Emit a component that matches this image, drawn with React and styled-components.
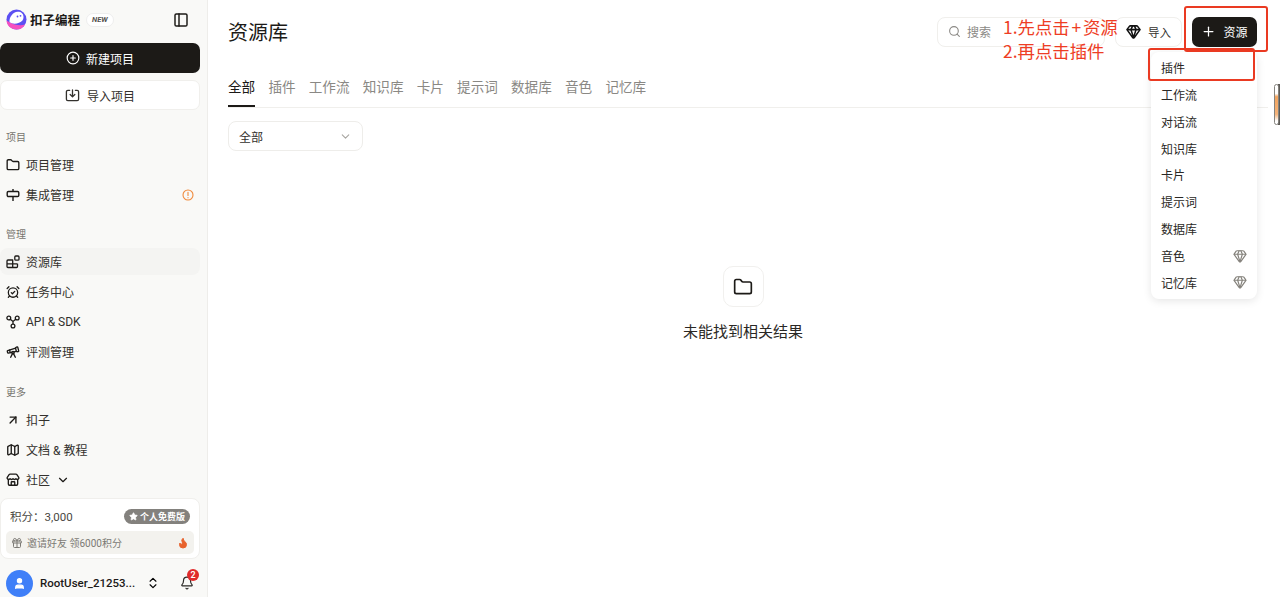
import React from "react";
import styled, { createGlobalStyle } from "styled-components";
import {
  AlarmClockCheck,
  ArrowUpRight,
  Bell,
  ChevronDown,
  ChevronsUpDown,
  CirclePlus,
  Flame,
  Folder,
  Gem,
  Gift,
  Map as MapIcon,
  PanelLeft,
  Plus,
  Search,
  Star,
  Store,
  Telescope,
  User,
} from "lucide-react";

const GlobalStyle = createGlobalStyle`
  html, body {
    margin: 0;
    height: 100%;
    overflow: hidden;
    background: #fff;
    font-family: "Roboto", "Noto Sans CJK SC", sans-serif;
  }
`;

const Page = styled.div`
  position: relative;
  display: flex;
  width: 1280px;
  height: 597px;
  overflow: hidden;
`;

const Sidebar = styled.aside`
  display: flex;
  flex-direction: column;
  flex: none;
  box-sizing: border-box;
  width: 208px;
  height: 597px;
  padding: 0 7px 0 0;
  background: #f9f9f7;
  border-right: 1px solid #eeedea;
`;

const Brand = styled.div`
  display: flex;
  align-items: center;
  height: 39px;
  margin-bottom: 1px;
  padding: 0 6px;
`;

const BrandName = styled.span`
  margin-left: 3px;
  font-size: 12.5px;
  font-weight: 700;
  color: #1c1a17;
`;

const NewTag = styled.span`
  margin-left: 6px;
  padding: 0 5px;
  height: 12px;
  line-height: 12px;
  border: 1px solid #eeeeee;
  border-radius: 7px;
  background: #fff;
  font-size: 7.5px;
  font-style: italic;
  font-weight: 700;
  color: #55534f;
`;

const Collapse = styled.span`
  display: flex;
  margin-left: auto;
  margin-right: 5px;
  color: #1c1a17;
`;

const PrimaryButton = styled.div`
  display: flex;
  align-items: center;
  justify-content: center;
  gap: 6px;
  height: 30px;
  margin-top: 3px;
  border-radius: 7px;
  background: #1c1a17;
  color: #fff;
  font-size: 12px;
`;

const SecondaryButton = styled.div`
  display: flex;
  align-items: center;
  justify-content: center;
  gap: 7px;
  height: 28px;
  margin-top: 7px;
  border: 1px solid #f0efec;
  border-radius: 7px;
  background: #fff;
  color: #33312d;
  font-size: 12px;
`;

const SectionLabel = styled.div`
  height: 16px;
  line-height: 16px;
  margin: ${(p) => p.$top}px 0 5px 6px;
  font-size: 10px;
  color: #77756f;
`;

const NavItem = styled.div`
  display: flex;
  align-items: center;
  gap: 6px;
  height: 27px;
  margin-bottom: 3px;
  padding: 0 6px;
  border-radius: 8px;
  background: ${(p) => (p.$active ? "#f4f4f2" : "transparent")};
  color: #33312d;
  font-size: 12px;
  svg {
    flex: none;
    color: #1c1a17;
  }
`;

const NavTail = styled.span`
  display: flex;
  margin-left: auto;
  svg {
    color: #f08a3c;
  }
`;

const CreditCard = styled.div`
  margin-top: 2px;
  height: 61px;
  box-sizing: border-box;
  padding: 9px 5px 0;
  border: 1px solid #f0efec;
  border-radius: 8px;
  background: #fff;
`;

const CreditRow = styled.div`
  display: flex;
  align-items: center;
  justify-content: space-between;
  height: 16px;
  padding: 0 4px;
  font-size: 11.5px;
  color: #4a4843;
`;

const PlanTag = styled.span`
  display: flex;
  align-items: center;
  gap: 2px;
  height: 15px;
  padding: 0 5px;
  border-radius: 8px;
  background: #83817d;
  color: #fff;
  font-size: 9px;
  font-weight: 600;
`;

const InviteRow = styled.div`
  display: flex;
  align-items: center;
  gap: 4px;
  height: 23px;
  margin-top: 7px;
  padding: 0 5px;
  border-radius: 5px;
  background: #f3f2ee;
  color: #7c7a75;
  font-size: 10px;
`;

const FlameWrap = styled.span`
  display: flex;
  margin-left: auto;
  color: #e8622c;
`;

const UserRow = styled.div`
  display: flex;
  align-items: center;
  flex: none;
  height: 28px;
  margin-top: 10px;
  padding-left: 6px;
`;

const Avatar = styled.span`
  display: flex;
  align-items: center;
  justify-content: center;
  flex: none;
  width: 27px;
  height: 27px;
  border-radius: 50%;
  background: #3f7ff8;
  color: #fff;
`;

const UserName = styled.span`
  flex: none;
  width: 94px;
  margin-left: 7px;
  margin-right: 12px;
  font-size: 11.5px;
  font-weight: 500;
  color: #1c1a17;
  white-space: nowrap;
`;

const BellWrap = styled.span`
  position: relative;
  display: flex;
  margin-left: 20px;
  color: #2a2825;
`;

const Badge = styled.span`
  position: absolute;
  top: -7px;
  right: -5px;
  width: 12px;
  height: 12px;
  line-height: 12px;
  border-radius: 50%;
  background: #e02b2b;
  color: #fff;
  font-size: 9px;
  font-weight: 600;
  text-align: center;
`;

const Main = styled.main`
  flex: 1;
  min-width: 0;
  padding: 0 12px 0 20px;
`;

const Header = styled.header`
  display: flex;
  align-items: center;
  height: 63px;
`;

const Title = styled.h1`
  margin: 0;
  font-size: 20px;
  font-weight: 400;
  color: #1c1a17;
`;

const Actions = styled.div`
  display: flex;
  align-items: center;
  margin-left: auto;
  margin-right: 11px;
`;

const SearchBox = styled.div`
  display: flex;
  align-items: center;
  gap: 6px;
  box-sizing: border-box;
  width: 168px;
  height: 30px;
  padding: 0 10px;
  border: 1px solid #f0efec;
  border-radius: 8px;
  color: #8b8985;
  font-size: 12px;
`;

const ImportButton = styled.div`
  display: flex;
  align-items: center;
  gap: 7px;
  box-sizing: border-box;
  width: 67px;
  height: 30px;
  margin-left: 10px;
  padding-left: 10px;
  border: 1px solid #f0efec;
  border-radius: 8px;
  background: #fff;
  color: #33312d;
  font-size: 11.5px;
`;

const ResourceButton = styled.div`
  display: flex;
  align-items: center;
  justify-content: center;
  gap: 7px;
  width: 65px;
  height: 30px;
  margin-left: 10px;
  border-radius: 7px;
  background: #1c1a17;
  color: #fff;
  font-size: 12px;
`;

const Tabs = styled.nav`
  display: flex;
  gap: 13.2px;
  height: 45px;
  box-sizing: border-box;
  border-bottom: 1px solid #f0efec;
`;

const Tab = styled.div`
  height: 44px;
  box-sizing: border-box;
  padding-top: 14px;
  line-height: 20px;
  font-size: 13.6px;
  color: ${(p) => (p.$active ? "#1c1a17" : "#8a8884")};
  border-bottom: 2px solid ${(p) => (p.$active ? "#1c1a17" : "transparent")};
`;

const Filter = styled.div`
  display: flex;
  align-items: center;
  justify-content: space-between;
  box-sizing: border-box;
  width: 135px;
  height: 30px;
  margin-top: 13px;
  padding: 0 10px;
  border: 1px solid #eeedea;
  border-radius: 8px;
  color: #33312d;
  font-size: 12px;
`;

const Empty = styled.div`
  display: flex;
  flex-direction: column;
  align-items: center;
  margin: 115px 10px 0 0;
`;

const EmptyIcon = styled.span`
  display: flex;
  align-items: center;
  justify-content: center;
  box-sizing: border-box;
  width: 41px;
  height: 41px;
  border: 1px solid #f1f0ee;
  border-radius: 10px;
  color: #1c1a17;
`;

const EmptyText = styled.div`
  margin-top: 14px;
  font-size: 15px;
  line-height: 22px;
  color: #2a2825;
`;

const Menu = styled.div`
  position: absolute;
  top: 52px;
  left: 1151px;
  box-sizing: border-box;
  width: 106px;
  height: 247px;
  padding-top: 2px;
  border-radius: 8px;
  background: #fff;
  box-shadow: 0 2px 8px rgba(0, 0, 0, 0.1);
`;

const MenuItem = styled.div`
  display: flex;
  align-items: center;
  justify-content: space-between;
  height: 26.875px;
  padding: 0 10px;
  font-size: 12px;
  color: #2a2825;
`;

const GemMark = styled.span`
  display: flex;
  color: #85827c;
`;

const Callout = styled.div`
  position: absolute;
  top: ${(p) => p.$top}px;
  left: ${(p) => p.$left}px;
  width: ${(p) => p.$width}px;
  height: ${(p) => p.$height}px;
  box-sizing: border-box;
  border: 2px solid #ea3a22;
  border-radius: 3px;
`;

const Note = styled.div`
  position: absolute;
  top: 15px;
  left: 1003px;
  font-family: "Noto Sans CJK SC", sans-serif;
  font-size: 17.4px;
  line-height: 24px;
  color: #ee3d24;
  white-space: nowrap;
`;

const NotePlus = styled.span`
  padding: 0 1.800px;
`;

const ScrollTrack = styled.div`
  position: absolute;
  top: 84px;
  right: 0;
  width: 2px;
  height: 41px;
  background: #5c5a56;
`;

const ScrollThumb = styled.div`
  position: absolute;
  top: 84px;
  right: 1px;
  box-sizing: border-box;
  width: 5px;
  height: 41px;
  border: 1px solid #85837e;
  border-radius: 3px;
  background: linear-gradient(#fff 0, #fff 22%, #f2a45e 30%, #f5b37a 75%, #fff 92%);
`;

const LogoMark = () => (
  <svg width="21" height="21" viewBox="0 0 21 21">
    <circle cx="10.500" cy="10.500" r="10" fill="#5b4ff2" />
    <path d="M.5 11.500C1 17 5 20.500 10.500 20.500c4 0 7-2 8.500-5-4 1.500-11 1-18.500-4z" fill="#f54fc0" />
    <path d="M3.500 13c-.5-5 3.500-10 8-10.300 3.500-.2 6 1.800 6 5.300 0 3-1.500 4.500-4.500 5.800-3 1.200-7 1.500-9.500-.8z" fill="#fff" />
    <circle cx="11.500" cy="7.500" r=".9" fill="#5b4ff2" />
    <circle cx="14.500" cy="6.800" r=".9" fill="#5b4ff2" />
  </svg>
);

const ImportIcon = ({ size = 16 }) => (
  <svg width={size} height={size} viewBox="0 0 16 16" fill="none" stroke="currentColor" strokeWidth="1.400" strokeLinecap="round" strokeLinejoin="round">
    <path d="M5 2.500H3a1.500 1.500 0 0 0-1.500 1.500v8A1.500 1.500 0 0 0 3 13.500h10a1.500 1.500 0 0 0 1.500-1.500V4A1.500 1.500 0 0 0 13 2.500h-2" />
    <path d="M8 2v7M5.500 7 8 9.500 10.500 7" />
  </svg>
);

const SignIcon = () => (
  <svg width="14" height="14" viewBox="0 0 14 14" fill="none" stroke="currentColor" strokeWidth="1.400" strokeLinejoin="round">
    <rect x="1.200" y="3.500" width="11.600" height="5" rx="1.200" />
    <path d="M7 1v2.500M7 8.500V13" />
  </svg>
);

const ShapesIcon = () => (
  <svg width="14" height="14" viewBox="0 0 14 14" fill="none" stroke="currentColor" strokeWidth="1.300" strokeLinejoin="round">
    <path d="M1 6a1 1 0 0 1 1-1h4.700v7.500H2a1 1 0 0 1-1-1zM1 8.800h10.500M6.700 12.500h3.800a1 1 0 0 0 1-1V8.800" />
    <rect x="8.800" y="1" width="4.200" height="4.200" rx="1" />
  </svg>
);

const GraphIcon = () => (
  <svg width="14" height="14" viewBox="0 0 14 14" fill="none" stroke="currentColor" strokeWidth="1.300">
    <circle cx="2.800" cy="3" r="1.900" />
    <circle cx="11.200" cy="3" r="1.900" />
    <circle cx="7" cy="11" r="1.900" />
    <path d="M4.300 4.200 7 6.500l2.700-2.300M7 6.500v2.600" />
  </svg>
);

const AlertIcon = () => (
  <svg width="12" height="12" viewBox="0 0 12 12" fill="none" stroke="currentColor" strokeWidth="1.100" strokeLinecap="round">
    <circle cx="6" cy="6" r="5" />
    <path d="M6 3.200v3.300M6 8.500v.2" />
  </svg>
);

const sections = [
  { label: "项目", top: 20, items: [
    { text: "项目管理", icon: <Folder size={14} strokeWidth={2.3} /> },
    { text: "集成管理", icon: <SignIcon />, alert: true },
  ] },
  { label: "管理", top: 16, items: [
    { text: "资源库", icon: <ShapesIcon />, active: true },
    { text: "任务中心", icon: <AlarmClockCheck size={14} strokeWidth={2.200} /> },
    { text: "API & SDK", icon: <GraphIcon /> },
    { text: "评测管理", icon: <Telescope size={14} strokeWidth={2.300} /> },
  ] },
  { label: "更多", top: 17, items: [
    { text: "扣子", icon: <ArrowUpRight size={14} strokeWidth={2.300} /> },
    { text: "文档 & 教程", icon: <MapIcon size={14} strokeWidth={2.300} /> },
    { text: "社区", icon: <Store size={14} strokeWidth={2.300} />, more: true },
  ] },
];

const tabs = ["全部", "插件", "工作流", "知识库", "卡片", "提示词", "数据库", "音色", "记忆库"];

const menuItems = [
  { text: "插件" },
  { text: "工作流" },
  { text: "对话流" },
  { text: "知识库" },
  { text: "卡片" },
  { text: "提示词" },
  { text: "数据库" },
  { text: "音色", paid: true },
  { text: "记忆库", paid: true },
];

export default function App() {
  return (
    <Page>
      <GlobalStyle />
      <Sidebar>
        <Brand>
          <LogoMark />
          <BrandName>扣子编程</BrandName>
          <NewTag>NEW</NewTag>
          <Collapse><PanelLeft size={16} strokeWidth={2.200} /></Collapse>
        </Brand>
        <PrimaryButton><CirclePlus size={14} />新建项目</PrimaryButton>
        <SecondaryButton><ImportIcon size={15} />导入项目</SecondaryButton>
        {sections.map((section) => (
          <React.Fragment key={section.label}>
            <SectionLabel $top={section.top}>{section.label}</SectionLabel>
            {section.items.map((item) => (
              <NavItem key={item.text} $active={item.active}>
                {item.icon}
                {item.text}
                {item.more && <ChevronDown size={14} />}
                {item.alert && <NavTail><AlertIcon /></NavTail>}
              </NavItem>
            ))}
          </React.Fragment>
        ))}
        <CreditCard>
          <CreditRow>
            <span>积分：3,000</span>
            <PlanTag><Star size={9} fill="#fff" />个人免费版</PlanTag>
          </CreditRow>
          <InviteRow>
            <Gift size={12} />邀请好友 领6000积分
            <FlameWrap><Flame size={12} fill="#e8622c" /></FlameWrap>
          </InviteRow>
        </CreditCard>
        <UserRow>
          <Avatar><User size={13} fill="#fff" /></Avatar>
          <UserName>RootUser_21253...</UserName>
          <ChevronsUpDown size={14} />
          <BellWrap>
            <Bell size={14} />
            <Badge>2</Badge>
          </BellWrap>
        </UserRow>
      </Sidebar>
      <Main>
        <Header>
          <Title>资源库</Title>
          <Actions>
            <SearchBox><Search size={13} />搜索</SearchBox>
            <ImportButton><Gem size={15} color="#111" strokeWidth={2.500} />导入</ImportButton>
            <ResourceButton><Plus size={15} />资源</ResourceButton>
          </Actions>
        </Header>
        <Tabs>
          {tabs.map((tab, i) => (
            <Tab key={tab} $active={i === 0}>{tab}</Tab>
          ))}
        </Tabs>
        <Filter>全部<ChevronDown size={13} color="#a8a6a1" /></Filter>
        <Empty>
          <EmptyIcon><Folder size={20} /></EmptyIcon>
          <EmptyText>未能找到相关结果</EmptyText>
        </Empty>
      </Main>
      <Menu>
        {menuItems.map((item) => (
          <MenuItem key={item.text}>
            {item.text}
            {item.paid && <GemMark><Gem size={14} /></GemMark>}
          </MenuItem>
        ))}
      </Menu>
      <Note>
        1.先点击<NotePlus>+</NotePlus>资源
        <br />
        2.再点击插件
      </Note>
      <Callout $top={6} $left={1184} $width={84} $height={46} />
      <Callout $top={48} $left={1148} $width={107} $height={33} />
      <ScrollTrack />
      <ScrollThumb />
    </Page>
  );
}
